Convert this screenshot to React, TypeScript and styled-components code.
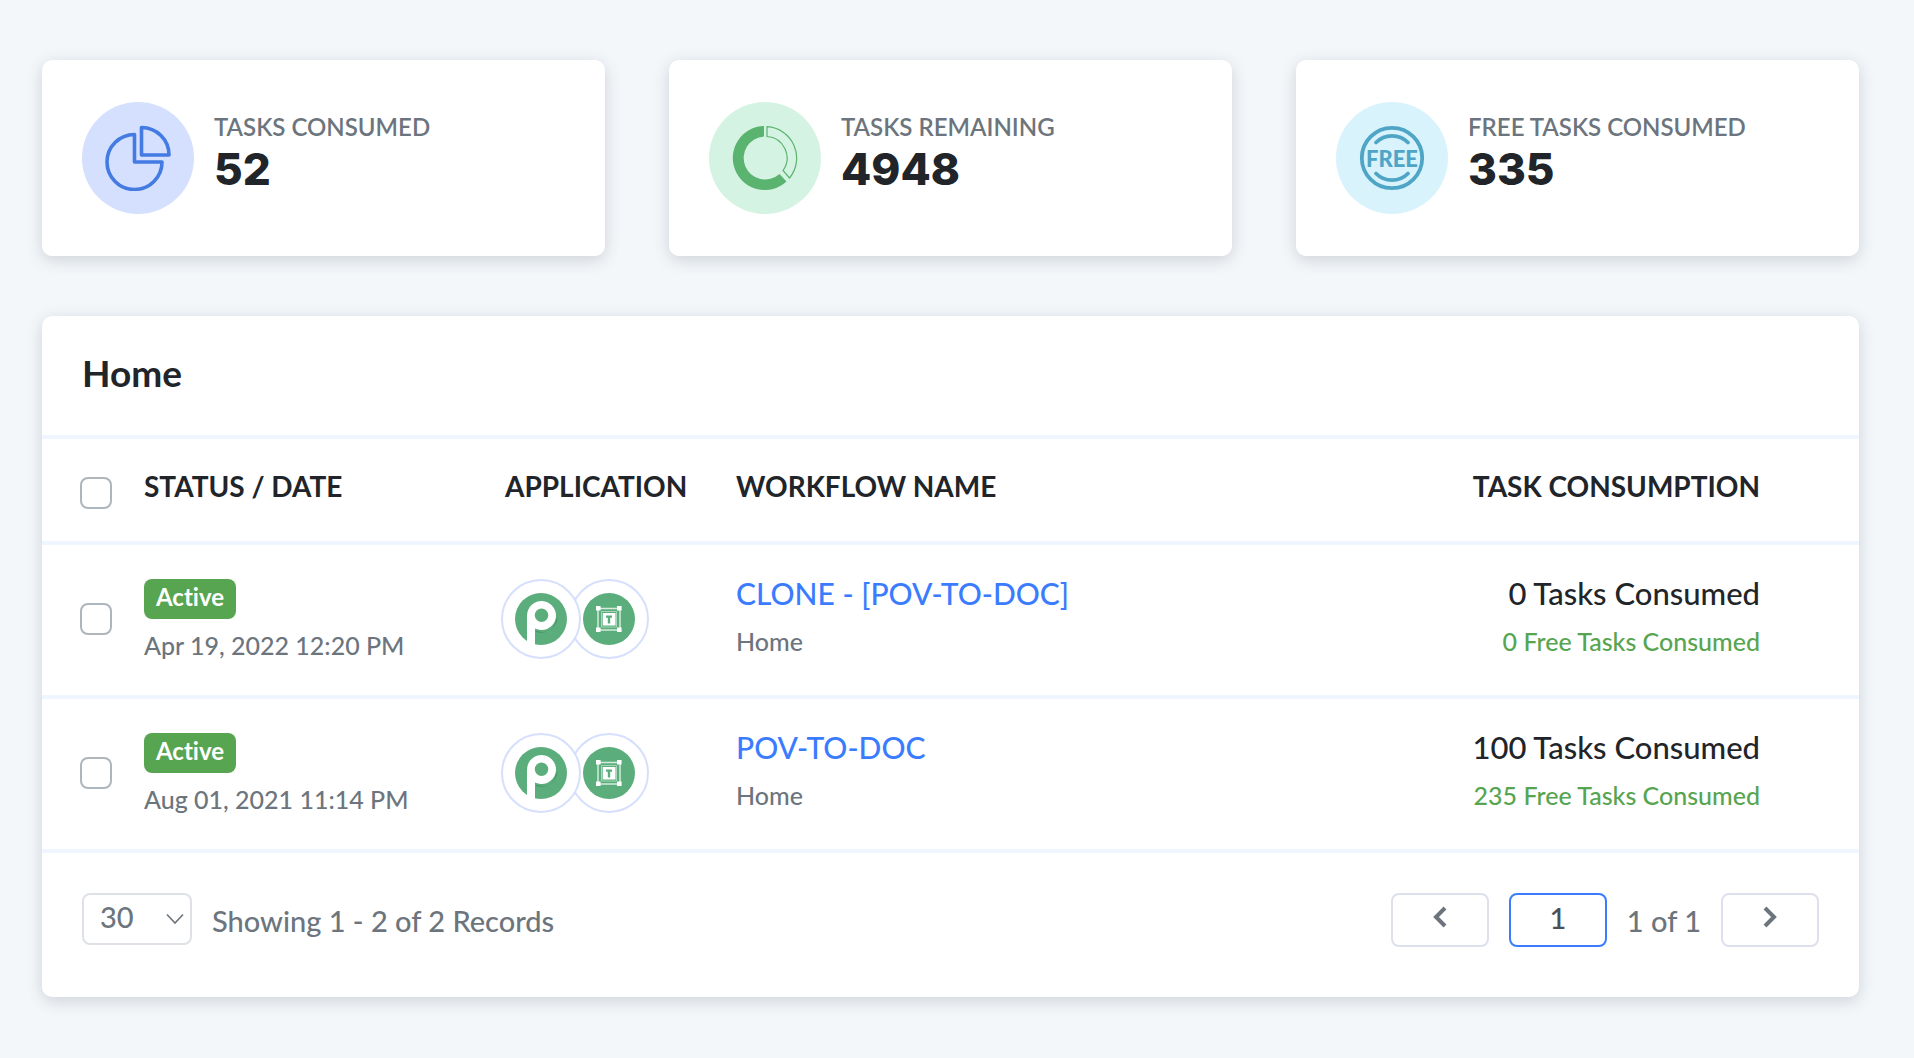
import { createGlobalStyle } from "styled-components";
import styled from "styled-components";

const GlobalStyle = createGlobalStyle`
  * { box-sizing: border-box; }
  body {
    margin: 0;
    background: #f3f7fa;
    color: #212529;
    font-family: Lato, "Noto Sans", "Liberation Sans", sans-serif;
    font-size: 25px;
    font-variant-ligatures: none;
    line-height: 32px;
  }
  button, input, select { font: inherit; }
`;

const Page = styled.main`
  display: flex;
  flex-direction: column;
  gap: 60px;
  padding: 60px 55px 60px 42px;
`;

const Stats = styled.section`
  display: grid;
  grid-template-columns: repeat(3, 1fr);
  gap: 64px;
`;

const Card = styled.article`
  display: flex;
  gap: 20px;
  padding: 42px 40px;
  background: #fff;
  border-radius: 10px;
  box-shadow: 0 4px 16px rgba(60, 70, 90, 0.2);
`;

const CardIcon = styled.span<{ $tint: string }>`
  display: grid;
  place-items: center;
  width: 112px;
  height: 112px;
  border-radius: 50%;
  background: ${(p) => p.$tint};
`;

const CardText = styled.div`
  padding-top: 9px;
`;

const CardLabel = styled.h2`
  margin: 0;
  font-size: 24px;
  font-weight: 600;
  line-height: 32px;
  color: #6c757d;
`;

const CardValue = styled.p`
  margin: 0;
  font-family: Inter, Lato, sans-serif;
  font-size: 44px;
  font-weight: 800;
  line-height: 52px;
`;

const Panel = styled.section`
  background: #fff;
  border-radius: 10px;
  box-shadow: 0 4px 16px rgba(60, 70, 90, 0.2);
`;

const PanelTitle = styled.h1`
  margin: 0;
  padding: 33px 40px 38px;
  font-size: 37px;
  font-weight: 700;
  line-height: 48px;
`;

const Table = styled.table`
  width: 100%;
  border-collapse: collapse;
  table-layout: fixed;
`;

const Row = styled.tr`
  border-top: 4px solid #f0f6ff;
`;

const HeadCell = styled.th<{ $width?: string; $end?: boolean }>`
  width: ${(p) => p.$width ?? "auto"};
  padding: ${(p) => (p.$end ? "29px 99px 32px 0" : "29px 0 32px")};
  font-size: 28px;
  font-weight: 700;
  line-height: 36px;
  text-align: ${(p) => (p.$end ? "right" : "left")};
  vertical-align: top;
  white-space: nowrap;
`;

const Cell = styled.td<{ $end?: boolean }>`
  padding: ${(p) => (p.$end ? "32px 99px 34px 0" : "32px 0 34px")};
  text-align: ${(p) => (p.$end ? "right" : "left")};
  vertical-align: top;
`;

const CheckLabel = styled.label<{ $head?: boolean }>`
  display: flex;
  padding: ${(p) => (p.$head ? "9px 0 0 38px" : "26px 0 0 38px")};
`;

const Check = styled.input`
  appearance: none;
  width: 32px;
  height: 32px;
  margin: 0;
  border: 2px solid #adb5bd;
  border-radius: 8px;
  background: #fff;
  &:checked { background: #3b7cff; }
`;

const Badge = styled.span`
  display: block;
  width: max-content;
  height: 40px;
  margin: 2px 0 10px;
  padding: 0 12px;
  border-radius: 8px;
  background: #57a551;
  color: #fff;
  font-size: 24px;
  font-weight: 700;
  line-height: 36px;
`;

const Muted = styled.span`
  display: block;
  font-weight: 500;
  color: #6c757d;
`;

const Apps = styled.div`
  display: flex;
  margin: 2px 0 0 -4px;
`;

const AppBubble = styled.span<{ $over?: boolean }>`
  position: relative;
  z-index: ${(p) => (p.$over ? 1 : 0)};
  display: grid;
  place-items: center;
  width: 80px;
  height: 80px;
  margin-right: -12px;
  border: 2px solid #d6e0fd;
  border-radius: 50%;
  background: #fff;
`;

const WorkflowLink = styled.a`
  display: block;
  margin-bottom: 16px;
  font-size: 30px;
  font-weight: 500;
  line-height: 32px;
  color: #3b7cff;
  text-decoration: none;
`;

const Tasks = styled.span`
  display: block;
  margin-bottom: 16px;
  font-size: 31px;
  font-weight: 500;
  line-height: 32px;
`;

const FreeTasks = styled.span`
  display: block;
  font-weight: 500;
  color: #57a551;
`;

const Footer = styled.footer`
  display: flex;
  justify-content: space-between;
  padding: 40px 40px 50px;
  border-top: 4px solid #f0f6ff;
  font-size: 29px;
  font-weight: 500;
  color: #6c757d;
`;

const Group = styled.div`
  display: flex;
  gap: 20px;
`;

const FooterText = styled.span`
  padding-top: 10px;
  line-height: 36px;
`;

const SelectWrap = styled.label`
  display: grid;
  align-items: center;
  width: 110px;
  height: 52px;
  svg { grid-area: 1 / 1; justify-self: end; margin-right: 8px; pointer-events: none; z-index: 1; }
`;

const Select = styled.select`
  grid-area: 1 / 1;
  appearance: none;
  width: 110px;
  height: 52px;
  padding: 0 16px 4px;
  border: 2px solid #dee2e6;
  border-radius: 8px;
  background: #fff;
  color: #6c757d;
`;

const Step = styled.button`
  display: grid;
  place-items: center;
  width: 98px;
  height: 54px;
  padding: 0 0 6px;
  border: 2px solid #dee0ee;
  border-radius: 8px;
  background: #fff;
  color: #6c757d;
`;

const PageInput = styled.input`
  width: 98px;
  height: 54px;
  padding: 0 0 6px;
  border: 2px solid #3b7cff;
  border-radius: 8px;
  background: #fff;
  color: #495057;
  text-align: center;
`;

const PieIcon = () => (
  <svg width="66" height="66" viewBox="0 0 66 66" fill="none" stroke="#437be3" strokeWidth="3.6" strokeLinejoin="round">
    <path d="M29.5 9.5A27.5 27.5 0 1 0 57 37H29.5Z" />
    <path d="M36.5 2.5V30H64A27.5 27.5 0 0 0 36.5 2.5Z" />
  </svg>
);

const DonutIcon = () => (
  <svg width="66" height="66" viewBox="0 0 66 66" fill="none">
    <path d="M32 1A32 32 0 1 0 54.5 56.5L47.5 49A21.5 21.5 0 1 1 32 11.5Z" fill="#5ab36f" />
    <path d="M35 1.7A31.4 31.4 0 0 1 57.500 53L51 45.500A21.500 21.500 0 0 0 35 11.5Z" stroke="#5ab36f" strokeWidth="1.200" />
  </svg>
);

const FreeIcon = () => (
  <svg width="66" height="66" viewBox="0 0 66 66" fill="none" stroke="#4fa5c5" strokeWidth="3.8" strokeLinecap="round">
    <circle cx="33" cy="33" r="30.2" />
    <path d="M17 17.500A22.500 22.500 0 0 1 49 17.500" />
    <path d="M17 48.500A22.500 22.500 0 0 0 49 48.500" />
    <text x="33" y="41.5" textAnchor="middle" fill="#4fa5c5" stroke="none" fontFamily="'Liberation Sans Narrow', Lato, sans-serif" fontWeight="900" fontSize="22">FREE</text>
  </svg>
);

const PIcon = () => (
  <svg width="52" height="52" viewBox="0 0 52 52">
    <circle cx="26" cy="26" r="26" fill="#5bae7c" />
    <path d="M20 38.500A15 15 0 0 0 41 27L42.500 24A15 15 0 0 1 22 38Z" fill="#4a9169" />
    <path d="M12 52V22.500A14.500 14.500 0 1 1 20 35.500V52Z" fill="#fff" />
    <circle cx="26.5" cy="22.200" r="6.700" fill="#5bae7c" />
  </svg>
);

const TIcon = () => (
  <svg width="52" height="52" viewBox="0 0 52 52">
    <circle cx="26" cy="26" r="26" fill="#5bae7c" />
    <path d="M15 15.500H37V37H15Z" fill="none" stroke="#d5ebdd" strokeWidth="1.500" />
    <path d="M18.500 18.500H33.500V34H18.500Z" fill="none" stroke="#a9d5b9" strokeWidth="1" />
    <path d="M13 13h4.600v4.600h-4.600zM34 13h4.600v4.600h-4.600zM13 34.500h4.600v4.600h-4.600zM34 34.500h4.600v4.600h-4.600zM19.700 20h12.800v12.500h-12.800z" fill="#fff" />
    <path d="M23 22.500H29V24.800H27.200V30.500H24.800V24.800H23Z" fill="#5bae7c" />
  </svg>
);

const stats = [
  { label: "TASKS CONSUMED", value: "52", tint: "#d4e0fd", icon: <PieIcon /> },
  { label: "TASKS REMAINING", value: "4948", tint: "#d5f3e3", icon: <DonutIcon /> },
  { label: "FREE TASKS CONSUMED", value: "335", tint: "#d8f3fc", icon: <FreeIcon /> },
];

const workflows = [
  { date: "Apr 19, 2022 12:20 PM", name: "CLONE - [POV-TO-DOC]", used: 0, free: 0 },
  { date: "Aug 01, 2021 11:14 PM", name: "POV-TO-DOC", used: 100, free: 235 },
];

export default function App() {
  return (
    <Page>
      <GlobalStyle />
      <Stats>
        {stats.map((s) => (
          <Card key={s.label}>
            <CardIcon $tint={s.tint}>{s.icon}</CardIcon>
            <CardText>
              <CardLabel>{s.label}</CardLabel>
              <CardValue>{s.value}</CardValue>
            </CardText>
          </Card>
        ))}
      </Stats>
      <Panel>
        <PanelTitle>Home</PanelTitle>
        <Table>
          <thead>
            <Row>
              <HeadCell $width="102px">
                <CheckLabel $head><Check type="checkbox" aria-label="Select all workflows" /></CheckLabel>
              </HeadCell>
              <HeadCell $width="361px">STATUS / DATE</HeadCell>
              <HeadCell $width="231px">APPLICATION</HeadCell>
              <HeadCell>WORKFLOW NAME</HeadCell>
              <HeadCell $end>TASK CONSUMPTION</HeadCell>
            </Row>
          </thead>
          <tbody>
            {workflows.map((w) => (
              <Row key={w.name}>
                <Cell>
                  <CheckLabel><Check type="checkbox" aria-label={`Select ${w.name}`} /></CheckLabel>
                </Cell>
                <Cell>
                  <Badge>Active</Badge>
                  <Muted>{w.date}</Muted>
                </Cell>
                <Cell>
                  <Apps>
                    <AppBubble $over><PIcon /></AppBubble>
                    <AppBubble><TIcon /></AppBubble>
                  </Apps>
                </Cell>
                <Cell>
                  <WorkflowLink href="#workflow">{w.name}</WorkflowLink>
                  <Muted>Home</Muted>
                </Cell>
                <Cell $end>
                  <Tasks>{w.used} Tasks Consumed</Tasks>
                  <FreeTasks>{w.free} Free Tasks Consumed</FreeTasks>
                </Cell>
              </Row>
            ))}
          </tbody>
        </Table>
        <Footer>
          <Group>
            <SelectWrap>
              <Select aria-label="Records per page" defaultValue="30">
                <option>30</option>
                <option>50</option>
                <option>100</option>
              </Select>
              <svg width="18" height="12" viewBox="0 0 18 12" fill="none" stroke="#6c757d" strokeWidth="1.600"><path d="M1 1.500L9 10L17 1.500" /></svg>
            </SelectWrap>
            <FooterText>Showing 1 - 2 of 2 Records</FooterText>
          </Group>
          <Group>
            <Step type="button" aria-label="Previous page">
              <svg width="14" height="22" viewBox="0 0 14 22" fill="none" stroke="currentColor" strokeWidth="4"><path d="M12 2L3 11L12 20" /></svg>
            </Step>
            <PageInput aria-label="Page number" defaultValue="1" />
            <FooterText>1 of 1</FooterText>
            <Step type="button" aria-label="Next page">
              <svg width="14" height="22" viewBox="0 0 14 22" fill="none" stroke="currentColor" strokeWidth="4"><path d="M2 2L11 11L2 20" /></svg>
            </Step>
          </Group>
        </Footer>
      </Panel>
    </Page>
  );
}
